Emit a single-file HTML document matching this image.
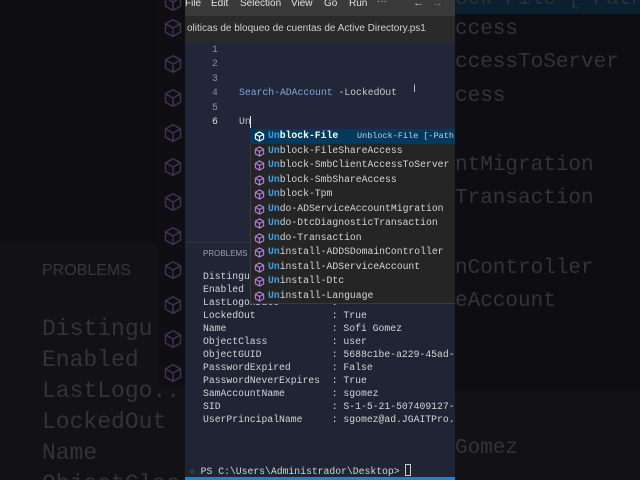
<!DOCTYPE html>
<html><head><meta charset="utf-8"><style>
*{margin:0;padding:0;box-sizing:border-box}
html,body{width:640px;height:480px;overflow:hidden}
body{background:#0e0e12;position:relative;font-family:"Liberation Mono",monospace}
.a{position:absolute;white-space:pre}
.big{font-family:"Liberation Mono",monospace;font-size:21px;color:#333338}
.m{font-size:9.75px;line-height:13px;color:#d4d4d4}
.s{font-family:"Liberation Sans",sans-serif}
.row{position:absolute;left:250px;width:205px;height:14.5px;font-size:9.75px;line-height:14.5px;color:#d4d4d4;white-space:nowrap;overflow:hidden}
.row svg{position:absolute;left:4px;top:2px}
.row .t{position:absolute;left:18px}
.row b{color:#3ba0e6;font-weight:bold}
</style></head><body>
<svg width="0" height="0" style="position:absolute"><defs>
<symbol id="p" viewBox="0 0 12 12"><path d="M6 1 L10.5 3.5 L10.5 8.5 L6 11 L1.5 8.5 L1.5 3.5 Z M1.5 3.5 L6 6 L10.5 3.5 M6 6 L6 11" fill="none" stroke="#b180d7" stroke-width="1.2" stroke-linejoin="round"/></symbol>
<symbol id="w" viewBox="0 0 12 12"><path d="M6 1 L10.5 3.5 L10.5 8.5 L6 11 L1.5 8.5 L1.5 3.5 Z M1.5 3.5 L6 6 L10.5 3.5 M6 6 L6 11" fill="none" stroke="#ffffff" stroke-width="1.2" stroke-linejoin="round"/></symbol>
<symbol id="d" viewBox="0 0 12 12"><path d="M6 1 L10.5 3.5 L10.5 8.5 L6 11 L1.5 8.5 L1.5 3.5 Z M1.5 3.5 L6 6 L10.5 3.5 M6 6 L6 11" fill="none" stroke="#3f3150" stroke-width="0.9" stroke-linejoin="round"/></symbol>
</defs></svg>
<div style="position:absolute;left:0;top:0;width:640px;height:480px;overflow:hidden">
<div class="a" style="left:0;top:242px;width:185px;height:238px;background:#121215"></div>
<div class="a" style="left:157px;top:0;width:28px;height:385px;background:#0f0f13"></div>
<div class="a s" style="left:42px;top:262px;font-size:16px;color:#38383c">PROBLEMS</div>
<div class="a big" style="left:42px;top:314px;line-height:31px;font-size:23px">Distingu
Enabled
LastLogo..
LockedOut
Name
ObjectClas</div>
<div style="position:absolute;left:163px;top:0">
<svg class="a" style="top:-8px" width="20" height="20"><use href="#d"/></svg>
<svg class="a" style="top:18px" width="20" height="20"><use href="#d"/></svg>
<svg class="a" style="top:54px" width="20" height="20"><use href="#d"/></svg>
<svg class="a" style="top:88px" width="20" height="20"><use href="#d"/></svg>
<svg class="a" style="top:123px" width="20" height="20"><use href="#d"/></svg>
<svg class="a" style="top:157px" width="20" height="20"><use href="#d"/></svg>
<svg class="a" style="top:192px" width="20" height="20"><use href="#d"/></svg>
<svg class="a" style="top:226px" width="20" height="20"><use href="#d"/></svg>
<svg class="a" style="top:260px" width="20" height="20"><use href="#d"/></svg>
<svg class="a" style="top:295px" width="20" height="20"><use href="#d"/></svg>
<svg class="a" style="top:329px" width="20" height="20"><use href="#d"/></svg>
<svg class="a" style="top:363px" width="20" height="20"><use href="#d"/></svg>
</div>
<div class="a" style="left:455px;top:0;width:185px;height:14px;background:#0b1f2e"></div>
<div class="a" style="left:455px;top:390px;width:185px;height:90px;background:#121215"></div>
<div class="a big" style="left:455px;top:-12px;color:#26323c">ock-File [-Path]</div>
<div class="a big" style="left:455px;top:18px">ccess</div>
<div class="a big" style="left:455px;top:51px">ccessToServer</div>
<div class="a big" style="left:455px;top:85px">cess</div>
<div class="a big" style="left:455px;top:154px">ntMigration</div>
<div class="a big" style="left:455px;top:187px">Transaction</div>
<div class="a big" style="left:455px;top:257px">nController</div>
<div class="a big" style="left:455px;top:290px">eAccount</div>
<div class="a big" style="left:455px;top:437px">Gomez</div>
<div class="a" style="left:185px;top:0;width:270px;height:16px;background:#3a3a3a"></div>
<div class="a s" style="left:185px;top:-2px;font-size:10px;color:#e0e0e0">File</div>
<div class="a s" style="left:211px;top:-2px;font-size:10px;color:#e0e0e0">Edit</div>
<div class="a s" style="left:240px;top:-2px;font-size:10px;color:#e0e0e0">Selection</div>
<div class="a s" style="left:291px;top:-2px;font-size:10px;color:#e0e0e0">View</div>
<div class="a s" style="left:324px;top:-2px;font-size:10px;color:#e0e0e0">Go</div>
<div class="a s" style="left:349px;top:-2px;font-size:10px;color:#e0e0e0">Run</div>
<div class="a s" style="left:377px;top:-4px;font-size:10px;color:#ccc">···</div>
<div class="a s" style="left:413px;top:-3px;font-size:11px;color:#bbb">←</div>
<div class="a s" style="left:432px;top:-3px;font-size:11px;color:#777">→</div>
<div class="a" style="left:185px;top:16px;width:270px;height:26px;background:#2a2a2b"></div>
<div class="a s" style="left:187px;top:23px;font-size:10px;color:#cfcfcf">oliticas de bloqueo de cuentas de Active Directory.ps1</div>
<div class="a" style="left:185px;top:42px;width:270px;height:200px;background:#212738"></div>
<div class="a m" style="left:212px;top:43px;line-height:14.4px;color:#8a8f9a">1
2
3
4
5
<span style="color:#ddd">6</span></div>
<div class="a m" style="left:239px;top:86px;line-height:14.4px"><span style="color:#7fa8dc">Search-ADAccount</span> <span style="color:#c8c8c8">-LockedOut</span></div>
<div class="a m" style="left:239px;top:115px;line-height:14.4px;color:#c8c8c8">Un</div>
<div class="a" style="left:250px;top:116px;width:1px;height:12px;background:#ddd"></div>
<div class="a s" style="left:413px;top:83px;font-size:11px;color:#bbb">I</div>
<div class="a" style="left:185px;top:242px;width:270px;height:238px;background:#1f2535;border-top:1px solid #2c3344"></div>
<div class="a s" style="left:203px;top:249px;font-size:8px;color:#9a9ea8">PROBLEMS</div>
<div class="a m" style="left:203px;top:270px;width:252px;overflow:hidden">Distingu
Enabled
LastLogonDate         :
LockedOut             : True
Name                  : Sofi Gomez
ObjectClass           : user
ObjectGUID            : 5688c1be-a229-45ad-
PasswordExpired       : False
PasswordNeverExpires  : True
SamAccountName        : sgomez
SID                   : S-1-5-21-507409127-
UserPrincipalName     : sgomez@ad.JGAITPro.</div>
<div class="a m" style="left:190px;top:464px"><span style="color:#888;font-size:8px">○</span> PS C:\Users\Administrador\Desktop&gt; <span style="display:inline-block;width:6px;height:12px;border:1px solid #ccc;vertical-align:-2px"></span></div>
<div class="a" style="left:185px;top:477px;width:270px;height:3px;background:#1a85d0"></div>
<div class="a" style="left:250px;top:129px;width:205px;height:175px;background:#252526;border:1px solid #3a3a3a;border-right:none"></div>
<div class="row" style="top:129px;background:#04395e;color:#fff"><svg width="11" height="11"><use href="#w"/></svg><span class="t"><b>Un</b><span style="font-weight:bold">block-File</span></span><span class="t" style="left:107px;font-size:8.5px;color:#c0d0e0">Unblock-File [-Path]</span></div>
<div class="row" style="top:143.5px"><svg width="11" height="11"><use href="#p"/></svg><span class="t"><b>Un</b>block-FileShareAccess</span></div>
<div class="row" style="top:158px"><svg width="11" height="11"><use href="#p"/></svg><span class="t"><b>Un</b>block-SmbClientAccessToServer</span></div>
<div class="row" style="top:172.5px"><svg width="11" height="11"><use href="#p"/></svg><span class="t"><b>Un</b>block-SmbShareAccess</span></div>
<div class="row" style="top:187px"><svg width="11" height="11"><use href="#p"/></svg><span class="t"><b>Un</b>block-Tpm</span></div>
<div class="row" style="top:201.5px"><svg width="11" height="11"><use href="#p"/></svg><span class="t"><b>Un</b>do-ADServiceAccountMigration</span></div>
<div class="row" style="top:216px"><svg width="11" height="11"><use href="#p"/></svg><span class="t"><b>Un</b>do-DtcDiagnosticTransaction</span></div>
<div class="row" style="top:230.5px"><svg width="11" height="11"><use href="#p"/></svg><span class="t"><b>Un</b>do-Transaction</span></div>
<div class="row" style="top:245px"><svg width="11" height="11"><use href="#p"/></svg><span class="t"><b>Un</b>install-ADDSDomainController</span></div>
<div class="row" style="top:259.5px"><svg width="11" height="11"><use href="#p"/></svg><span class="t"><b>Un</b>install-ADServiceAccount</span></div>
<div class="row" style="top:274px"><svg width="11" height="11"><use href="#p"/></svg><span class="t"><b>Un</b>install-Dtc</span></div>
<div class="row" style="top:288.5px"><svg width="11" height="11"><use href="#p"/></svg><span class="t"><b>Un</b>install-Language</span></div>
</div>
</body></html>
